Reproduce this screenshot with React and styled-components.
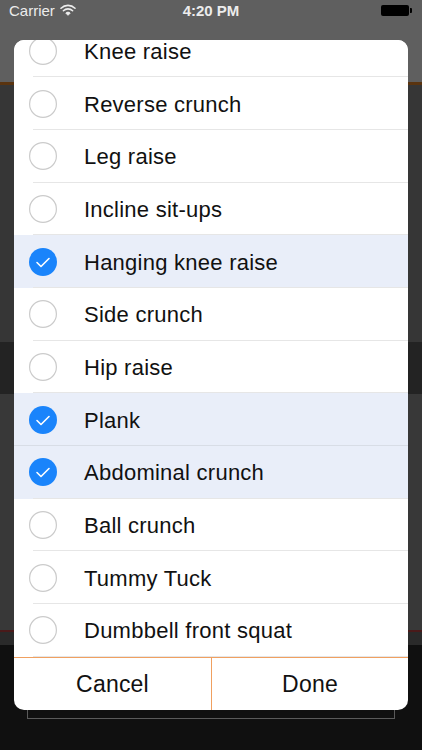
import React from "react";
import styled, { createGlobalStyle } from "styled-components";

const Global = createGlobalStyle`
  html, body { margin: 0; padding: 0; }
  body { font-family: "Liberation Sans", Arial, sans-serif; background: #101010; }
  * { box-sizing: border-box; }
`;

const Screen = styled.div`
  position: relative;
  width: 422px;
  height: 750px;
  overflow: hidden;
  display: flex;
  flex-direction: column;
  background: #101010;
`;

const StatusBar = styled.div`
  height: 20px;
  padding: 0 9px;
  display: grid;
  grid-template-columns: 1fr auto 1fr;
  align-items: center;
  background: #5f5f5f;
  color: #ececec;
  font-size: 15px;
`;

const Carrier = styled.div`
  display: flex;
  align-items: center;
  gap: 5px;
`;

const Time = styled.div`
  font-weight: bold;
  font-size: 15px;
`;

const Battery = styled.div`
  justify-self: end;
  display: flex;
  align-items: center;
  gap: 1px;
  margin-right: 1px;
`;

const BatteryBody = styled.div`
  width: 28px;
  height: 11px;
  border-radius: 2px;
  background: #000;
`;

const BatteryTip = styled.div`
  width: 2px;
  height: 5px;
  border-radius: 0 1px 1px 0;
  background: #000;
`;

const NavArea = styled.div`
  height: 65px;
  background: #5f5f5f;
  border-bottom: 3px solid #5a3410;
`;

const Section = styled.div`
  height: ${(p) => p.$h}px;
  background: ${(p) => p.$bg};
`;

const Bottom = styled.div`
  flex: 1;
  background: #101010;
  padding: 0 27px;
`;

const OutlineBox = styled.div`
  height: 74px;
  border: 1px solid #5a5a5a;
  border-top: none;
`;

const Modal = styled.div`
  position: absolute;
  left: 14px;
  top: 40px;
  width: 394px;
  height: 670px;
  background: #fff;
  border-radius: 10px;
  overflow: hidden;
  display: flex;
  flex-direction: column;
`;

const List = styled.div`
  flex: 1;
  overflow: hidden;
  border-bottom: 1px solid #f0a060;
`;

const ListInner = styled.div`
  margin-top: -15.5px;
`;

const Row = styled.div`
  height: 52.7px;
  display: flex;
  align-items: center;
  position: relative;
  background: ${(p) => (p.$checked ? "#e9eef9" : "#fff")};
  &::after {
    content: "";
    position: absolute;
    left: ${(p) => (p.$fullSep ? 0 : 19)}px;
    right: 0;
    bottom: 0;
    height: 1px;
    background: ${(p) => (p.$fullSep ? "#d8dde6" : "#e6e6e6")};
  }
`;

const CircleWrap = styled.div`
  width: 28px;
  height: 28px;
  margin-left: 15px;
  margin-right: 27px;
  flex-shrink: 0;
`;

const Label = styled.div`
  font-size: 22px;
  line-height: 26px;
  padding-top: 2px;
  letter-spacing: 0.25px;
  color: #111;
`;

const Buttons = styled.div`
  height: 52px;
  display: grid;
  grid-template-columns: 197px 1fr;
`;

const Button = styled.div`
  display: flex;
  align-items: center;
  justify-content: center;
  font-size: 23px;
  letter-spacing: 0.2px;
  color: #111;
  border-left: ${(p) => (p.$divider ? "1px solid #f0a060" : "none")};
`;

const Circle = ({ checked }) =>
  checked ? (
    <svg width="28" height="28" viewBox="0 0 28 28">
      <circle cx="14" cy="14" r="14" fill="#1a84fb" />
      <path d="M8 14.5 L12 18.5 L20 10.5" fill="none" stroke="#fff" strokeWidth="1.6" strokeLinecap="round" strokeLinejoin="round" />
    </svg>
  ) : (
    <svg width="28" height="28" viewBox="0 0 28 28">
      <circle cx="14" cy="14" r="13.4" fill="none" stroke="#cbcbcb" strokeWidth="1.2" />
    </svg>
  );

const Wifi = () => (
  <svg width="16" height="12" viewBox="0 0 16 12">
    <path d="M1 4.2 A10 10 0 0 1 15 4.2" fill="none" stroke="#ececec" strokeWidth="1.6" strokeLinecap="round" />
    <path d="M3.4 6.7 A6.6 6.6 0 0 1 12.6 6.7" fill="none" stroke="#ececec" strokeWidth="1.6" strokeLinecap="round" />
    <path d="M5.8 9.1 A3.2 3.2 0 0 1 10.2 9.1 L8 11.3 Z" fill="#ececec" stroke="#ececec" strokeWidth="1" strokeLinejoin="round" />
  </svg>
);

const items = [
  ["Knee raise", false],
  ["Reverse crunch", false],
  ["Leg raise", false],
  ["Incline sit-ups", false],
  ["Hanging knee raise", true],
  ["Side crunch", false],
  ["Hip raise", false],
  ["Plank", true],
  ["Abdominal crunch", true],
  ["Ball crunch", false],
  ["Tummy Tuck", false],
  ["Dumbbell front squat", false],
];

export default function App() {
  return (
    <Screen>
      <Global />
      <StatusBar>
        <Carrier>
          Carrier <Wifi />
        </Carrier>
        <Time>4:20 PM</Time>
        <Battery>
          <BatteryBody />
          <BatteryTip />
        </Battery>
      </StatusBar>
      <NavArea />
      <Section $h={257} $bg="#363636" />
      <Section $h={52} $bg="#232323" />
      <Section $h={236} $bg="#383838" />
      <Section $h={2} $bg="#4a1a1a" />
      <Section $h={13} $bg="#2a2a2a" />
      <Bottom>
        <OutlineBox />
      </Bottom>
      <Modal>
        <List>
          <ListInner>
            {items.map(([name, checked], i) => (
              <Row
                key={name}
                $checked={checked}
                $fullSep={checked && items[i + 1] && items[i + 1][1]}
              >
                <CircleWrap>
                  <Circle checked={checked} />
                </CircleWrap>
                <Label>{name}</Label>
              </Row>
            ))}
          </ListInner>
        </List>
        <Buttons>
          <Button>Cancel</Button>
          <Button $divider>Done</Button>
        </Buttons>
      </Modal>
    </Screen>
  );
}
